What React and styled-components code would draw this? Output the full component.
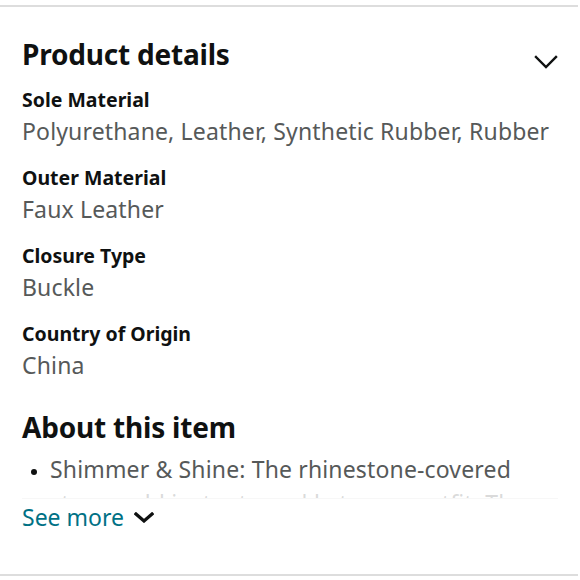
import React from "react";
import styled, { createGlobalStyle } from "styled-components";

const GlobalStyle = createGlobalStyle`
  html, body {
    margin: 0;
    padding: 0;
    background: #ffffff;
  }
  body {
    font-family: "Noto Sans", "Liberation Sans", Arial, sans-serif;
    color: #0f1111;
  }
`;

const Page = styled.div`
  width: 580px;
  height: 580px;
  box-sizing: border-box;
  padding: 5px 2px 0 0;
  overflow: hidden;
`;

const Card = styled.section`
  border-top: 2px solid #dddddd;
  border-bottom: 2px solid #dddddd;
  height: 571px;
  box-sizing: border-box;
  padding: 29px 20px 0 22px;
`;

const HeaderRow = styled.div`
  display: flex;
  justify-content: space-between;
  align-items: flex-end;
`;

const Title = styled.h2`
  margin: 0;
  font-size: 28px;
  line-height: 36px;
  font-weight: 700;
  color: #0f1111;
  letter-spacing: -0.2px;
`;

const Chevron = styled.svg`
  display: block;
  flex: none;
  margin-bottom: ${(p) => p.$mb || 0}px;
`;

const DetailList = styled.dl`
  margin: 14px 0 0 0;
  display: flex;
  flex-direction: column;
  gap: 16px;
`;

const DetailItem = styled.div`
  display: flex;
  flex-direction: column;
`;

const Label = styled.dt`
  font-size: 19.5px;
  line-height: 28px;
  font-weight: 700;
  color: #0f1111;
`;

const Value = styled.dd`
  margin: 0;
  font-size: 23px;
  line-height: 34px;
  letter-spacing: 0.15px;
  color: #565959;
`;

const SubTitle = styled(Title)`
  margin-top: 27px;
`;

const BulletWrap = styled.div`
  position: relative;
  margin-top: 7px;
  height: 47px;
  overflow: hidden;
`;

const Bullets = styled.ul`
  margin: 0;
  padding: 0 0 0 28px;
  font-size: 23px;
  line-height: 34px;
  letter-spacing: 0.15px;
  color: #565959;

  li::marker {
    color: #0f1111;
    font-size: 18px;
  }
`;

const Fade = styled.div`
  position: absolute;
  left: 0;
  right: 0;
  top: 36px;
  bottom: 0;
  background: rgba(255, 255, 255, 0.78);
  border-bottom: 1px solid #f7f7f7;
`;

const SeeMore = styled.a`
  display: inline-flex;
  align-items: center;
  gap: 10px;
  margin-top: 3px;
  font-size: 23px;
  line-height: 30px;
  color: #007185;
  text-decoration: none;
`;

const ChevronIcon = ({ w, h, mb, strokeWidth }) => (
  <Chevron $mb={mb} width={w} height={h} viewBox={`0 0 ${w} ${h}`} fill="none">
    <path
      d={`M2 2 L${w / 2} ${h - 2} L${w - 2} 2`}
      stroke="#0f1111"
      strokeWidth={strokeWidth}
      strokeLinecap="square"
    />
  </Chevron>
);

const details = [
  { label: "Sole Material", value: "Polyurethane, Leather, Synthetic Rubber, Rubber" },
  { label: "Outer Material", value: "Faux Leather" },
  { label: "Closure Type", value: "Buckle" },
  { label: "Country of Origin", value: "China" },
];

export default function App() {
  return (
    <Page>
      <GlobalStyle />
      <Card>
        <HeaderRow>
          <Title>Product details</Title>
          <ChevronIcon w={24} h={14} mb={3} strokeWidth={2.4} />
        </HeaderRow>
        <DetailList>
          {details.map((d) => (
            <DetailItem key={d.label}>
              <Label>{d.label}</Label>
              <Value>{d.value}</Value>
            </DetailItem>
          ))}
        </DetailList>
        <SubTitle>About this item</SubTitle>
        <BulletWrap>
          <Bullets>
            <li>Shimmer &amp; Shine: The rhinestone-covered</li>
            <li>straps add instant sparkle to any outfit. The</li>
          </Bullets>
          <Fade />
        </BulletWrap>
        <SeeMore href="#">
          See more
          <ChevronIcon w={20} h={11} strokeWidth={3.2} />
        </SeeMore>
      </Card>
    </Page>
  );
}
